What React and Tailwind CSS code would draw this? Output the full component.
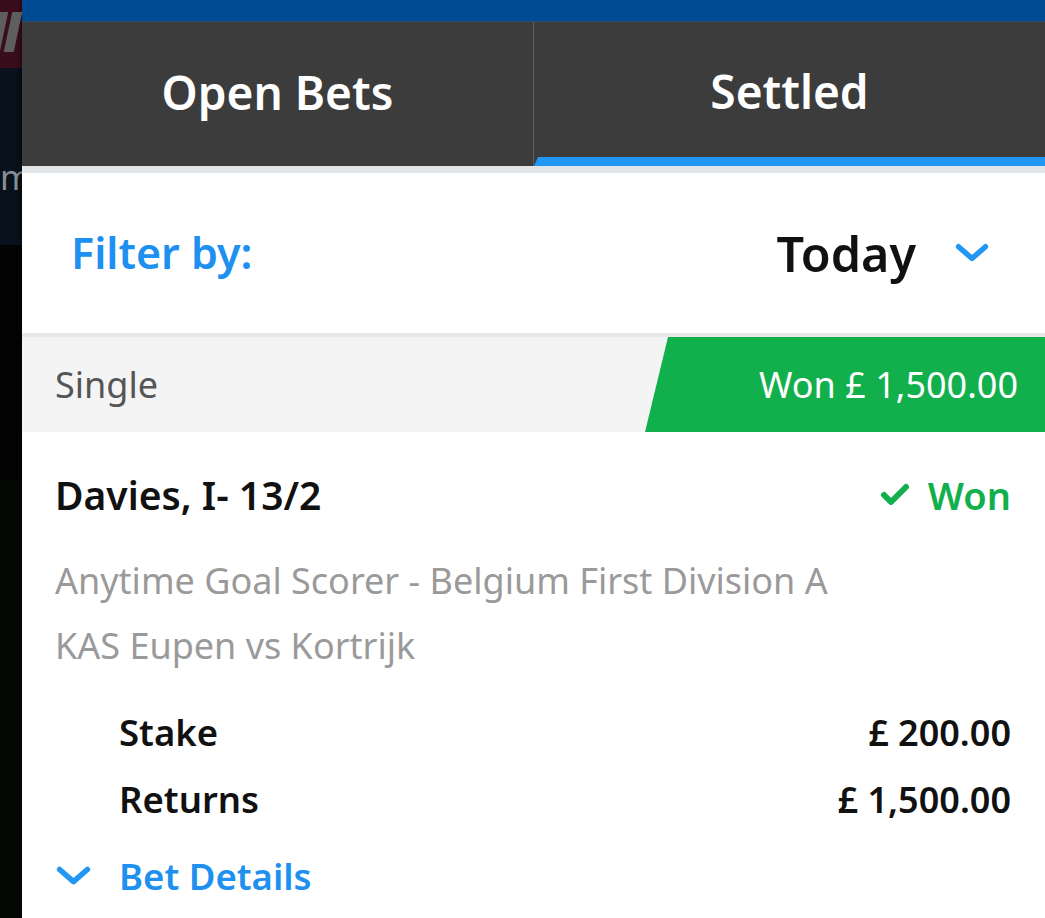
import React from 'react'

const font = { fontFamily: '"Noto Sans", "Open Sans", sans-serif' }

function Chevron({ className }) {
  return (
    <svg viewBox="0 0 40 24" className={className} fill="none" stroke="currentColor" strokeWidth="6" strokeLinecap="round" strokeLinejoin="round">
      <path d="M5 5 L20 18 L35 5" />
    </svg>
  )
}

export default function App() {
  return (
    <div className="flex w-[1045px] h-[918px] overflow-hidden bg-black" style={font}>
      {/* page behind the sheet */}
      <div className="w-[22px] shrink-0 flex flex-col">
        <div className="h-[68px] shrink-0 bg-[#3a0d1c] flex items-start pt-[12px] gap-[4px] -ml-[6px]">
          <div className="w-[10px] h-[40px] bg-[#5e5e5e] -skew-x-12" />
          <div className="w-[10px] h-[40px] bg-[#5e5e5e] -skew-x-12" />
        </div>
        <div className="h-[177px] shrink-0 bg-[#08111c] text-[#8a8f96] text-[34px] leading-none pt-[92px]">m</div>
        <div className="h-[235px] shrink-0 bg-[#030303]" />
        <div className="flex-1 bg-[#040802]" />
      </div>

      {/* sheet */}
      <div className="flex-1 flex flex-col bg-white overflow-hidden shadow-[-2px_0_4px_rgba(0,0,0,0.4)]">
        <div className="h-[22px] shrink-0 bg-[#004a93] border-b border-[#2f4d70]" />

        {/* tabs */}
        <div className="flex h-[144px] shrink-0 bg-[#3c3c3c]">
          <div className="flex-1 flex items-center justify-center text-white font-semibold text-[46px] pb-[4px]">Open Bets</div>
          <div className="w-px bg-[#5d5d5d]" />
          <div className="flex-1 flex flex-col">
            <div className="flex-1 flex items-center justify-center text-white font-semibold text-[46px] pt-[4px]">Settled</div>
            <div className="h-[9px] bg-[#2196f3] [clip-path:polygon(4px_0,100%_0,100%_100%,0_100%)]" />
          </div>
        </div>
        <div className="h-[7px] shrink-0 bg-[#e3e6e9]" />

        {/* filter */}
        <div className="h-[160px] shrink-0 flex items-center justify-between pl-[49px] pr-[55px]">
          <span className="text-[#1e90ef] font-semibold text-[43px]">Filter by:</span>
          <div className="flex items-center gap-[38px]">
            <span className="text-[#111] font-semibold text-[48.5px]">Today</span>
            <Chevron className="w-[36px] h-[22px] text-[#2196f3]" />
          </div>
        </div>
        <div className="h-[4px] shrink-0 bg-[#e8e8e8]" />

        {/* bet type bar */}
        <div className="h-[95px] shrink-0 flex items-center justify-between bg-[#f4f4f4]">
          <span className="pl-[33px] text-[#555] text-[36px]">Single</span>
          <div className="h-full w-[400px] bg-[#12b04c] flex items-center justify-end pr-[27px] text-white text-[36px] [clip-path:polygon(23px_0,100%_0,100%_100%,0_100%)]">
            Won £ 1,500.00
          </div>
        </div>

        {/* selection */}
        <div className="flex flex-col shrink-0 pl-[33px] pr-[34px]">
          <div className="flex items-center justify-between pt-[36px]">
            <span className="text-[#111] font-semibold text-[39px] leading-[54px]">Davies, I- 13/2</span>
            <span className="flex items-center gap-[18px] text-[#12b04c] font-semibold text-[38px] leading-[54px]">
              <svg viewBox="0 0 30 24" className="w-[30px] h-[24px]" fill="none" stroke="currentColor" strokeWidth="6" strokeLinecap="round" strokeLinejoin="round">
                <path d="M4 12 L11 19 L26 4" />
              </svg>
              Won
            </span>
          </div>
          <div className="text-[#9a9a9a] text-[36px] leading-[65px] mt-[26px]">Anytime Goal Scorer - Belgium First Division A</div>
          <div className="text-[#9a9a9a] text-[36px] leading-[65px]">KAS Eupen vs Kortrijk</div>

          <div className="flex flex-col pl-[64px] mt-[21px]">
            <div className="flex items-center justify-between h-[67px]">
              <span className="text-[#111] font-semibold text-[36.5px]">Stake</span>
              <span className="text-[#111] font-semibold text-[36px]">£ 200.00</span>
            </div>
            <div className="flex items-center justify-between h-[67px]">
              <span className="text-[#111] font-semibold text-[36.5px]">Returns</span>
              <span className="text-[#111] font-semibold text-[36px]">£ 1,500.00</span>
            </div>
          </div>

          <div className="flex items-center gap-[27px] h-[86px]">
            <Chevron className="w-[37px] h-[24px] text-[#2196f3]" />
            <span className="text-[#1e90ef] font-semibold text-[36.5px]">Bet Details</span>
          </div>
        </div>
      </div>
    </div>
  )
}
